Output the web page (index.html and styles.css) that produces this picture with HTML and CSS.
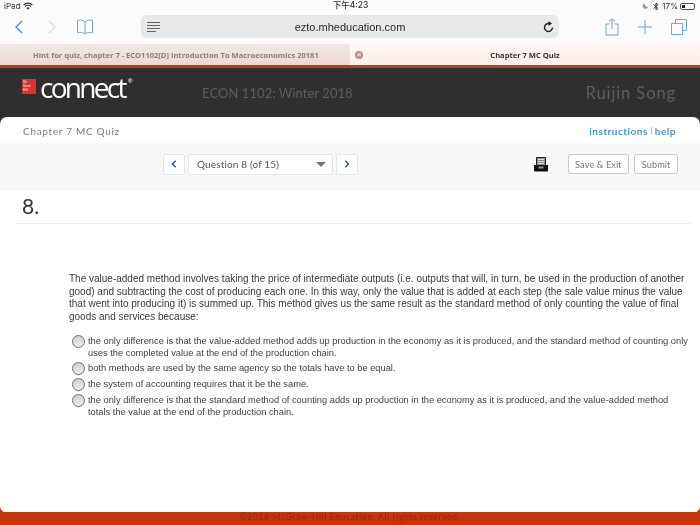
FILE: index.html
```html
<!DOCTYPE html>
<html lang="en">
<head>
<meta charset="utf-8">
<title>Chapter 7 MC Quiz</title>
<link rel="stylesheet" href="styles.css">
</head>
<body>
<div class="page">
  <header class="status">
    <div class="status-left">
      <span>iPad</span>
      <svg class="wifi" width="10" height="8" viewBox="0 0 10 8"><path d="M.6 3a6.200 6.200 0 0 1 8.800 0M2.100 4.500a4 4 0 0 1 5.800 0" fill="none" stroke="#333" stroke-width="1.100"/><path d="M5 7.800 3.400 6a2.200 2.200 0 0 1 3.200 0Z" fill="#333"/></svg>
    </div>
    <div class="status-time">下午4:23</div>
    <div class="status-right">
      <svg class="moon" width="7" height="8" viewBox="0 0 8 8"><path d="M3 1a3.200 3.200 0 1 0 4 4A3.600 3.600 0 0 1 3 1Z" fill="#999"/></svg>
      <svg width="6" height="9" viewBox="0 0 6 9"><path d="M0.500 2.500 5 6.300 3 8V1L5 2.700 0.500 6.500" fill="none" stroke="#333" stroke-width="1"/></svg>
      <span>17%</span>
      <span class="battery"><span class="battery-level"></span></span>
    </div>
  </header>

  <nav class="toolbar">
    <div class="tool-left">
      <svg width="10" height="14" viewBox="0 0 10 14"><path d="M8 1 2 7l6 6" fill="none" stroke="#3d8fd6" stroke-width="1.300"/></svg>
      <svg class="fwd" width="10" height="14" viewBox="0 0 10 14"><path d="M2 1l6 6-6 6" fill="none" stroke="#dcdcde" stroke-width="1.300"/></svg>
      <svg class="book" width="18" height="16" viewBox="0 0 18 16"><path d="M9 3C7.500 1.200 4 .8 1.500 1.300V13.600C4 13.100 7.500 13.300 9 15 10.500 13.300 14 13.100 16.500 13.600V1.300C14 .8 10.500 1.200 9 3ZM9 3V15" fill="none" stroke="#6fa5d8" stroke-width="1"/></svg>
    </div>
    <div class="urlbar">
      <svg class="reader" width="13" height="10" viewBox="0 0 13 10"><path d="M0 .5h13M0 3.500h13M0 6.500h13M0 9.500h9" stroke="#666" stroke-width="1"/></svg>
      <span class="url">ezto.mheducation.com</span>
      <svg class="reload" width="11" height="12" viewBox="0 0 11 12"><path d="M6.500 2.600A4 4 0 1 0 9.500 6.600" fill="none" stroke="#222" stroke-width="1.400"/><path d="M5.500 0l3.500 2.600-3.500 2.400Z" fill="#222"/></svg>
    </div>
    <div class="tool-right">
      <svg width="14" height="18" viewBox="0 0 14 18"><path d="M4.500 6H1v11h12V6H9.500M7 11V1M4 3.500 7 .7l3 2.800" fill="none" stroke="#6fa5d8" stroke-width="1"/></svg>
      <svg width="14" height="14" viewBox="0 0 14 14"><path d="M7 0v14M0 7h14" stroke="#6fa5d8" stroke-width="1"/></svg>
      <svg width="16" height="16" viewBox="0 0 16 16"><path d="M4.500 4.500V.5h11v11h-4M.5 4.500h11v11H.5Z" fill="none" stroke="#6fa5d8" stroke-width="1"/></svg>
    </div>
  </nav>

  <div class="tabs">
    <div class="tab tab-inactive">Hint for quiz, chapter 7 - ECO1102[D] Introduction To Macroeconomics 20181</div>
    <div class="tab tab-active">
      <span class="tab-close">×</span>
      <span class="tab-title">Chapter 7 MC Quiz</span>
    </div>
  </div>

  <div class="brand-bar">
    <div class="brand-logo">
      <span class="mh-logo"><span>Mc</span><span>Graw</span><span>Hill</span></span>
      <span class="connect">connect</span><sup class="reg">®</sup>
    </div>
    <div class="course">ECON 1102: Winter 2018</div>
    <div class="user">Ruijin Song</div>
  </div>

  <main class="card">
    <div class="card-title">
      <span class="quiz-name">Chapter 7 MC Quiz</span>
      <span class="links"><a>instructions</a><i class="sep"></i><a>help</a></span>
    </div>

    <div class="controls">
      <button class="nav-btn"><svg width="6" height="8" viewBox="0 0 6 8"><path d="M4.700 .8 1.500 4l3.200 3.200" fill="none" stroke="#2b5f8f" stroke-width="1.600"/></svg></button>
      <div class="select"><span>Question 8 (of 15)</span><i class="caret"></i></div>
      <button class="nav-btn"><svg width="6" height="8" viewBox="0 0 6 8"><path d="M1.300 .8 4.500 4 1.300 7.200" fill="none" stroke="#2b5f8f" stroke-width="1.600"/></svg></button>
      <svg class="print" width="14" height="15" viewBox="0 0 14 15"><path d="M2.500 .5h9v8h-9Z" fill="#8a8d8f" stroke="#222"/><path d="M4 2.500h6M4 4.500h6M4 6.500h6" stroke="#ddd"/><path d="M0 8h14v5.500a1 1 0 0 1-1 1H1a1 1 0 0 1-1-1Z" fill="#111"/><path d="M4.500 9.500h5v2h-5Z" fill="#999"/></svg>
      <button class="action save">Save &amp; Exit</button>
      <button class="action">Submit</button>
    </div>

    <h1 class="q-number">8.</h1>

    <section class="question">
      <p class="q-text">The value-added method involves taking the price of intermediate outputs (i.e. outputs that will, in turn, be used in the production of another good) and subtracting the cost of producing each one. In this way, only the value that is added at each step (the sale value minus the value that went into producing it) is summed up. This method gives us the same result as the standard method of only counting the value of final goods and services because:</p>
      <ul class="options">
        <li><span class="radio"></span><span>the only difference is that the value-added method adds up production in the economy as it is produced, and the standard method of counting only uses the completed value at the end of the production chain.</span></li>
        <li><span class="radio"></span><span>both methods are used by the same agency so the totals have to be equal.</span></li>
        <li><span class="radio"></span><span>the system of accounting requires that it be the same.</span></li>
        <li><span class="radio"></span><span>the only difference is that the standard method of counting adds up production in the economy as it is produced, and the value-added method totals the value at the end of the production chain.</span></li>
      </ul>
    </section>
  </main>

  <footer class="footer">©2018 McGraw-Hill Education. All rights reserved.</footer>
</div>
</body>
</html>
```

FILE: styles.css
```css
* { box-sizing: border-box; }
html, body { margin: 0; padding: 0; background: #fff; }
.page {
  width: 700px;
  height: 525px;
  display: flex;
  flex-direction: column;
  overflow: hidden;
  font-family: "Liberation Sans", Arial, sans-serif;
  background: linear-gradient(#2f2f2f 60%, #c8330a 60%);
  filter: blur(0.3px);
}

.status {
  height: 15px;
  flex: none;
  padding: 0 5px 3px 4px;
  background: #fbfbfb;
  display: grid;
  grid-template-columns: 1fr auto 1fr;
  align-items: center;
  font: 8px Inter, "Noto Sans CJK SC", sans-serif;
  color: #333;
}
.status-left { display: flex; align-items: center; gap: 3px; }
.status-time { font-size: 8.500px; line-height: 10px; font-weight: 500; margin-left: 2px; margin-top: -3px; }
.status-right { display: flex; align-items: center; justify-content: flex-end; gap: 3px; }
.moon { margin-right: 1px; }
.battery {
  width: 15px; height: 7px; border: 1px solid #555; border-radius: 2px; padding: 1px; display: flex;
  margin-left: -1px;
}
.battery-level { width: 3px; background: #222; }

.toolbar {
  height: 29px;
  flex: none;
  background: #fbfbfb;
  display: flex;
  align-items: flex-start;
}
.tool-left {
  width: 141px;
  height: 23px;
  padding-left: 14px;
  display: flex;
  align-items: center;
  flex: none;
}
.fwd { margin-left: 23px; }
.book { margin-left: 19px; }
.urlbar {
  width: 418px;
  height: 23px;
  flex: none;
  background: #e7e8ea;
  border-radius: 6px;
  display: flex;
  align-items: center;
  padding: 0 5px 0 6px;
  font: 11px "Liberation Sans", sans-serif;
  color: #2a2a2a;
}
.url { flex: 1; text-align: center; padding-right: 3px; }
.tool-right {
  flex: 1;
  height: 23px;
  display: flex;
  align-items: center;
  padding-left: 46px;
  gap: 19px;
}

.tabs {
  height: 21px;
  flex: none;
  display: flex;
  font: bold 7.550px "Open Sans", sans-serif;
}
.tab { display: flex; align-items: center; width: 350px; }
.tab-inactive {
  padding-left: 33px;
  background: linear-gradient(#f1e8e7, #edd7d3);
  color: #86807f;
}
.tab-active {
  color: #333;
  background: linear-gradient(#fff8f6, #fdeee9);
  padding: 0 13px 0 5px;
}
.tab-title { flex: 1; text-align: center; }
.tab-close {
  width: 8px; height: 8px; border-radius: 50%;
  background: #b09492; color: #f0dedc;
  font: bold 8px/8px "Liberation Sans", sans-serif;
  text-align: center;
}

.brand-bar {
  height: 52px;
  flex: none;
  background: #2f2f2f;
  border-top: 3px solid #b83c1c;
  display: flex;
  align-items: center;
  font-family: Lato, sans-serif;
  color: #5c5c5c;
  padding-right: 24px;
}
.brand-logo {
  width: 202px;
  flex: none;
  padding: 0 0 12px 22px;
  display: flex;
  align-items: center;
  color: #fff;
}
.mh-logo {
  width: 14px; height: 15px; background: #d9312b; color: #f5c9c5;
  font: bold 3px/4px "Liberation Sans", sans-serif;
  display: flex; flex-direction: column; padding: 1px;
  margin-right: 4px;
}
.connect { font: 28px/26px "Open Sans", sans-serif; letter-spacing: -2.700px; }
.reg { font-size: 6px; align-self: flex-start; margin: 4px 0 0 3px; line-height: 6px; }
.course { flex: 1; font-size: 13px; letter-spacing: 0.070px; }
.user { font-size: 16.500px; letter-spacing: 0.900px; }

.card {
  flex: 1;
  min-height: 0;
  background: #fff;
  border-radius: 7px;
}
.card-title {
  height: 26px;
  padding: 2px 24px 0 23px;
  display: flex;
  align-items: center;
  justify-content: space-between;
  font: 10px Lato, sans-serif;
  letter-spacing: 0.700px;
  color: #7b7b7b;
}
.links { display: flex; align-items: center; color: #4a93c4; font-weight: 700; letter-spacing: 0.500px; }
.sep { width: 1px; height: 7px; background: #bbb; margin: 0 3px 2px; }

.controls {
  height: 47px;
  background: #f8f8f8;
  border-bottom: 1px solid #f0f0f0;
  display: flex;
  align-items: center;
  padding: 0 22px 4px 163px;
}
.nav-btn {
  width: 22px;
  height: 21px;
  padding: 0;
  background: #fff;
  border: 1px solid #e6e6e6;
  border-radius: 2px;
  display: flex;
  align-items: center;
  justify-content: center;
}
.select {
  width: 145px;
  height: 21px;
  margin: 0 3px;
  padding: 0 6px 0 8px;
  background: #fff;
  border: 1px solid #e6e6e6;
  border-radius: 2px;
  display: flex;
  align-items: center;
  justify-content: space-between;
  font: 10px Lato, sans-serif;
  letter-spacing: 0.150px;
  color: #555;
}
.caret {
  width: 0; height: 0;
  border-left: 5px solid transparent;
  border-right: 5px solid transparent;
  border-top: 5px solid #777;
}
.print { margin-left: auto; margin-right: 20px; }
.action {
  height: 20px;
  padding: 0 6.500px;
  background: #fff;
  border: 1px solid #c9c9c9;
  border-radius: 3px;
  font: 9.200px Lato, sans-serif;
  letter-spacing: 0.100px;
  color: #6d7b8a;
}
.save { margin-right: 5px; }

.q-number {
  margin: 0 8px 0 16px;
  padding: 3px 0 0 6px;
  height: 34px;
  border-bottom: 1px solid #efefef;
  font: 21px/25px Lato, sans-serif;
  color: #333;
}

.question { padding: 49px 12px 0 69px; }
.q-text {
  margin: 0 0 11px;
  font: 10px/12.600px "Liberation Sans", sans-serif;
  color: #3a3a3a;
}
.options {
  list-style: none;
  margin: 0;
  padding: 0;
  font: 9.300px/11.500px "Liberation Sans", sans-serif;
  color: #3f3f3f;
}
.options li { display: flex; padding: 2px 0; }
.radio {
  width: 13px; height: 13px; flex: none;
  margin: -1px 3px 0 3px;
  border-radius: 50%;
  border: 1px solid #6f6f6f;
  background: linear-gradient(#cfcfcf, #ececec);
}

.footer {
  height: 12px;
  flex: none;
  margin-top: -1px;
  margin-bottom: 1px;
  background: #c8330a;
  color: #8e2a10;
  font: 8.500px/11px Lato, sans-serif;
  letter-spacing: 0.650px;
  text-align: center;
}
```
